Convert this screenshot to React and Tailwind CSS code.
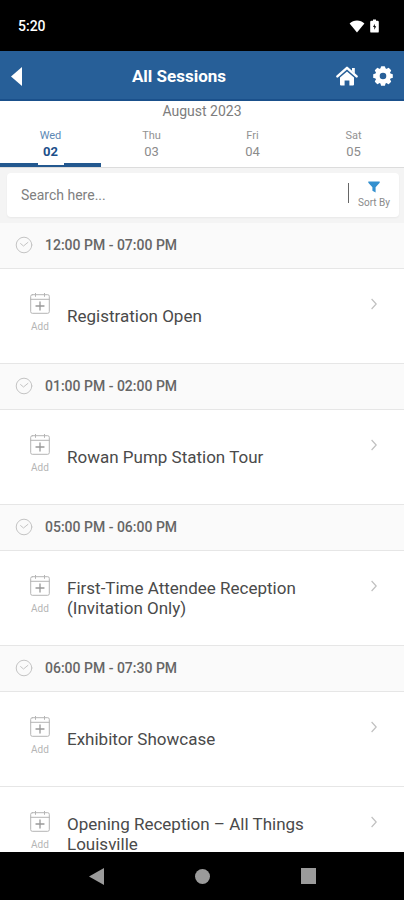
import { useState } from 'react';

const DAYS = [
    { day: 'Wed', date: '02' },
    { day: 'Thu', date: '03' },
    { day: 'Fri', date: '04' },
    { day: 'Sat', date: '05' },
];

const GROUPS = [
    { time: '12:00 PM - 07:00 PM', sessions: ['Registration Open'] },
    { time: '01:00 PM - 02:00 PM', sessions: ['Rowan Pump Station Tour'] },
    { time: '05:00 PM - 06:00 PM', sessions: ['First-Time Attendee Reception (Invitation Only)'] },
    { time: '06:00 PM - 07:30 PM', sessions: ['Exhibitor Showcase', 'Opening Reception – All Things Louisville'] },
];

const GEAR_TEETH = [0, 45, 90, 135, 180, 225, 270, 315];

const HomeIcon = () => (
    <svg viewBox="0 0 22 20" className="w-[22px] h-5" fill="none">
        <path d="M1.4 10.4 11 1.8l9.6 8.6" stroke="#fff" strokeWidth="2.4" strokeLinecap="round" strokeLinejoin="round" />
        <path d="M16 2h2.8v5.4L16 4.8z" fill="#fff" />
        <path d="M11 5.4 18 11.6V18.6a1 1 0 0 1-1 1h-3.6v-5H8.6v5H5a1 1 0 0 1-1-1V11.6z" fill="#fff" />
    </svg>
);

const GearIcon = () => (
    <svg viewBox="0 0 20 20" className="w-5 h-5">
        {GEAR_TEETH.map((angle) => (
            <path key={angle} d="M7.2 4 7.9.8Q8 .2 8.6.2h2.8q.6 0 .7.6l.7 3.2z" fill="#fff" transform={`rotate(${angle} 10 10)`} />
        ))}
        <circle cx="10" cy="10" r="5.6" stroke="#fff" strokeWidth="4.6" fill="none" />
    </svg>
);

const ClockIcon = () => (
    <svg viewBox="0 0 18 18" className="w-[18px] h-[18px] shrink-0" fill="none" stroke="#c4c4c4" strokeLinecap="round" strokeLinejoin="round">
        <circle cx="9" cy="9" r="7.8" />
        <path d="m5.6 7.6 2.9 2.4 4.4-3.6" />
    </svg>
);

const CalendarPlusIcon = () => (
    <svg viewBox="0 0 20 22" className="w-5 h-[22px]" fill="none" stroke="#b5b5b5" strokeLinecap="round">
        <rect x=".7" y="2.7" width="18.6" height="18.6" rx="1.6" />
        <path d="M.7 7.3h18.6M5.5 1.4v3M14.5 1.4v3" />
        <path d="M10 10v8M6 14h8" strokeWidth="1.3" stroke="#999" />
    </svg>
);

const StatusBar = () => (
    <div className="h-[51px] shrink-0 bg-black text-white flex items-center justify-between pl-[18px] pr-[25px] pt-px">
        <span className="text-sm font-medium">5:20</span>
        <div className="flex items-center gap-[5px]">
            <svg viewBox="0 0 16 13" className="w-4 h-[13px]" fill="#fff">
                <path d="M8 12.6.6 3.6C2.6 1.6 5.2.6 8 .6s5.4 1 7.4 3z" />
            </svg>
            <svg viewBox="0 0 9 14" className="w-[9px] h-3.5">
                <path d="M3 .4h3v1.4h1.6q1.2 0 1.2 1.2v9.4q0 1.2-1.2 1.2H1.4q-1.2 0-1.2-1.2V3q0-1.2 1.2-1.2H3z" fill="#fff" />
                <path d="M4.8 4.8 3 8h1.3v2.8L6.2 7.2H4.8z" fill="#000" />
            </svg>
        </div>
    </div>
);

const Header = () => (
    <header className="h-[50px] shrink-0 bg-[#275f98] border-b-2 border-[#1a508b] flex items-center px-[11px] pt-0.5">
        <button type="button" aria-label="Back" className="h-full flex items-center">
            <svg viewBox="0 0 11 19" className="w-[11px] h-[19px]" fill="#fff">
                <path d="M11 0v19L0 9.5z" />
            </svg>
        </button>
        <h1 className="flex-1 text-center text-[17px] font-bold text-white pt-0.5">All Sessions</h1>
        <div className="flex items-center gap-[15px]">
            <button type="button" aria-label="Home"><HomeIcon /></button>
            <button type="button" aria-label="Settings"><GearIcon /></button>
        </div>
    </header>
);

const DayTabs = ({ selected, onSelect }) => (
    <div className="shrink-0 bg-white border-b border-[#dcdcdc]">
        <p className="h-5 leading-5 text-sm text-center text-[#7d7d7d]">August 2023</p>
        <div className="grid grid-cols-4">
            {DAYS.map(({ day, date }) => {
                const active = date === selected;
                return (
                    <button
                        key={date}
                        type="button"
                        onClick={() => onSelect(date)}
                        className={`h-[46px] pt-[7px] flex flex-col items-center border-b-4 ${active ? 'border-[#23588f]' : 'border-transparent'}`}
                    >
                        <span className={`text-[11px] leading-4 ${active ? 'text-[#5c88b4]' : 'text-[#929292]'}`}>{day}</span>
                        <span className={`text-[13px] leading-4 ${active ? 'font-bold text-[#1d4f8a]' : 'text-[#8c8c8c]'}`}>{date}</span>
                        {active && <span className="w-[26px] h-[5px] shrink-0 bg-white" />}
                    </button>
                );
            })}
        </div>
    </div>
);

const SearchBar = () => (
    <div className="shrink-0 bg-[#f4f4f4] pt-[5px] pb-1.5 pl-[7px] pr-[5px]">
        <div className="h-11 bg-white rounded-sm shadow-xs flex items-center">
            <input
                type="text"
                aria-label="Search sessions"
                placeholder="Search here..."
                className="flex-1 min-w-0 h-full pl-3.5 text-sm outline-none text-[#444] placeholder:text-[#808080]"
            />
            <span className="w-px h-5 mb-1 bg-[#666]" />
            <button type="button" className="w-[50px] flex flex-col items-center gap-0.5 pt-px">
                <svg viewBox="0 0 12 12" className="w-3 h-3" fill="#3490cf">
                    <path d="M.3.5h11.4v1.3L7.6 6.2v5.4L4.4 9.8V6.2L.3 1.8z" />
                </svg>
                <span className="text-[10px] leading-4 text-[#8a8a8a]">Sort By</span>
            </button>
        </div>
    </div>
);

const SessionRow = ({ title }) => (
    <li className="h-[95px] bg-white border-b border-[#e6e6e6] flex">
        <button type="button" className="w-5 ml-[30px] mt-[23px] self-start flex flex-col items-center">
            <CalendarPlusIcon />
            <span className="mt-[5px] text-[10px] leading-4 text-[#b5b5b5]">Add</span>
        </button>
        <a href="#session" className="flex-1 flex pl-[17px] pr-[27px]">
            <span className="flex-1 self-center pr-10 text-[17px] leading-5 text-[#4a4a4a]">{title}</span>
            <svg viewBox="0 0 6 12" className="w-1.5 h-3 mt-[29px]" fill="none" stroke="#c0c0c0" strokeWidth="1.2">
                <path d="m.6 1 4.6 5-4.6 5" />
            </svg>
        </a>
    </li>
);

const SessionGroup = ({ time, sessions }) => (
    <section>
        <h2 className="h-[46px] bg-[#fafafa] border-b border-[#e6e6e6] flex items-center gap-3 pl-[15px] pb-px text-sm font-medium text-[#666]">
            <ClockIcon />
            {time}
        </h2>
        <ul>
            {sessions.map((title) => <SessionRow key={title} title={title} />)}
        </ul>
    </section>
);

const NavBar = () => (
    <nav className="h-12 shrink-0 bg-black flex items-center justify-center gap-[91px]">
        <button type="button" aria-label="Back">
            <svg viewBox="0 0 15 17" className="w-[15px] h-[17px]" fill="#9b9b9b"><path d="M15 0v17L0 8.5z" /></svg>
        </button>
        <button type="button" aria-label="Home">
            <span className="block w-[15px] h-[15px] rounded-full bg-[#9b9b9b]" />
        </button>
        <button type="button" aria-label="Recent apps">
            <span className="block w-[15px] h-4 bg-[#9b9b9b]" />
        </button>
    </nav>
);

const App = () => {
    const [selected, setSelected] = useState('02');

    return (
        <div className="h-screen flex flex-col bg-white font-['Roboto',sans-serif]">
            <StatusBar />
            <Header />
            <DayTabs selected={selected} onSelect={setSelected} />
            <SearchBar />
            <main className="flex-1 min-h-0 overflow-y-auto [scrollbar-width:none]">
                {GROUPS.map((group) => <SessionGroup key={group.time} {...group} />)}
            </main>
            <NavBar />
        </div>
    );
};

export default App;
